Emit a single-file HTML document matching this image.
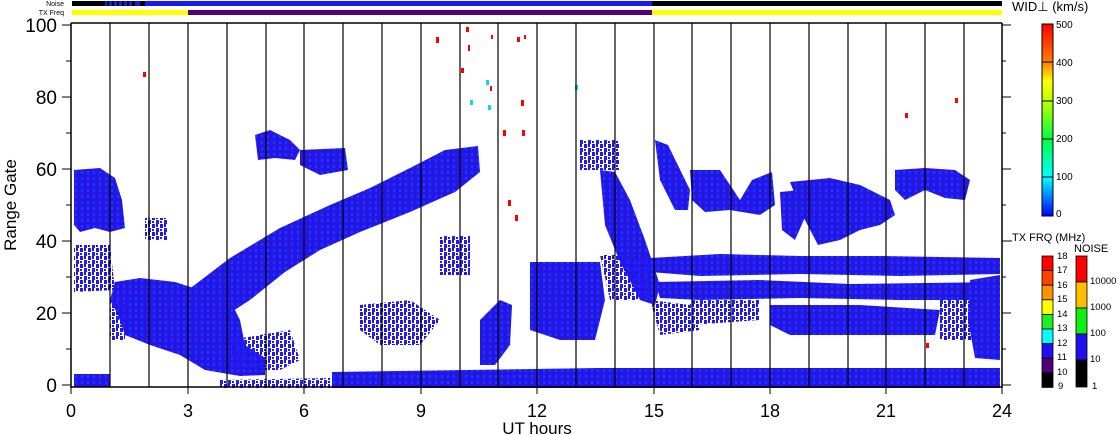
<!DOCTYPE html>
<html><head><meta charset="utf-8"><style>
html,body{margin:0;padding:0;background:#fff;width:1118px;height:435px;overflow:hidden}
svg{display:block}
text{font-family:"Liberation Sans","DejaVu Sans",sans-serif;fill:#000}
</style></head><body>
<svg width="1118" height="435" viewBox="0 0 1118 435" xmlns="http://www.w3.org/2000/svg">
<defs>
<linearGradient id="wid" x1="0" y1="1" x2="0" y2="0">
<stop offset="0" stop-color="#0000ff"/><stop offset="0.2" stop-color="#00ffff"/>
<stop offset="0.4" stop-color="#00ff40"/><stop offset="0.6" stop-color="#c0ff00"/>
<stop offset="0.7" stop-color="#ffff00"/><stop offset="0.8" stop-color="#ff8000"/>
<stop offset="1" stop-color="#ff0000"/></linearGradient>
<pattern id="sp" width="6" height="6" patternUnits="userSpaceOnUse">
<rect width="6" height="6" fill="#2216f0"/><rect x="0" y="0" width="2" height="3" fill="#3a10c0"/><rect x="3" y="3" width="2" height="3" fill="#1040ff"/>
</pattern>
<pattern id="sp2" width="8" height="8" patternUnits="userSpaceOnUse">
<rect x="0" y="0" width="3" height="4" fill="#2216f0"/><rect x="4" y="4" width="3" height="4" fill="#1a20ff"/><rect x="4" y="0" width="2" height="3" fill="#3010d0"/><rect x="0" y="5" width="2" height="2" fill="#2216f0"/>
</pattern>
</defs>

<rect x="72" y="1" width="930" height="5" fill="#1818f0"/>
<rect x="72" y="1" width="33" height="5" fill="#000"/>
<g fill="#000"><rect x="107" y="1" width="2" height="5"/><rect x="112" y="1" width="2" height="5"/><rect x="117" y="1" width="2" height="5"/><rect x="122" y="1" width="2" height="5"/><rect x="127" y="1" width="2" height="5"/><rect x="132" y="1" width="3" height="5"/><rect x="140" y="1" width="5" height="5"/></g>
<rect x="652" y="1" width="350" height="5" fill="#000"/>
<rect x="72" y="10" width="116" height="5" fill="#ffff00"/>
<rect x="188" y="10" width="464" height="5" fill="#500078"/>
<rect x="652" y="10" width="350" height="5" fill="#ffff00"/>
<text x="64" y="6" font-size="7" text-anchor="end">Noise</text>
<text x="64" y="15" font-size="7" text-anchor="end">TX Freq</text>

<g fill="url(#sp)">
<polygon points="74,170 100,168 115,178 122,200 125,228 110,232 95,228 80,232 74,225"/>
<polygon points="115,282 140,278 175,282 200,290 230,300 240,320 245,345 265,358 265,375 240,376 205,370 180,355 150,345 125,335 118,315 110,300"/>
<polygon points="188,290 230,258 280,228 330,205 370,188 410,168 445,150 478,146 480,172 455,192 410,212 360,232 320,250 285,272 250,300 222,318 200,322"/>
<polygon points="332,372 600,368 1000,368 1000,388 332,388"/>
<polygon points="74,374 110,374 110,387 74,387"/>
<polygon points="600,170 615,172 630,200 645,240 660,285 655,305 640,300 620,262 605,225"/>
<polygon points="655,140 668,145 690,190 688,210 675,210 660,180"/>
<polygon points="690,170 720,170 740,200 752,180 772,172 775,205 760,215 730,210 705,212 692,200"/>
<polygon points="780,192 800,190 806,215 795,240 782,230"/>
<polygon points="790,182 830,178 860,185 890,200 895,215 880,225 860,230 840,240 818,245 805,220"/>
<polygon points="895,170 925,168 955,170 970,180 965,200 945,198 925,190 905,200 895,190"/>
<polygon points="650,258 720,254 800,256 880,256 1000,258 1000,274 900,276 800,274 700,276 650,272"/>
<polygon points="655,282 760,280 850,284 1000,282 1000,300 900,300 800,298 700,300 660,298"/>
<polygon points="770,305 860,305 940,310 935,335 880,335 790,335 770,325"/>
<polygon points="970,280 1000,275 1000,360 975,358 968,320"/>
<polygon points="530,262 600,262 605,300 595,340 560,340 530,330"/>
<polygon points="480,320 500,300 512,305 510,345 495,365 480,365"/>
<polygon points="255,135 270,130 290,140 300,150 295,160 275,158 258,160"/>
<polygon points="300,150 345,148 348,170 320,175 300,165"/>
</g>
<g fill="url(#sp2)">
<polygon points="74,245 110,245 115,290 74,292"/>
<polygon points="145,218 168,218 168,240 145,240"/>
<polygon points="230,340 290,330 300,360 280,370 235,370"/>
<polygon points="360,305 410,300 440,320 420,345 380,345 360,330"/>
<polygon points="440,236 470,236 470,275 440,275"/>
<polygon points="650,300 690,305 700,330 660,335"/>
<polygon points="690,300 760,300 760,320 690,325"/>
<polygon points="940,300 970,300 975,340 940,340"/>
<polygon points="220,380 330,378 330,388 220,388"/>
<polygon points="580,140 620,140 620,170 580,170"/>
<polygon points="110,300 125,300 125,340 110,340"/>
<polygon points="600,255 650,255 650,300 610,300"/>
</g>
<g fill="#ff0000">
<rect x="436" y="37" width="3" height="6"/><rect x="466" y="27" width="3" height="5"/><rect x="468" y="45" width="2" height="6"/><rect x="491" y="35" width="2" height="4"/><rect x="517" y="37" width="3" height="5"/><rect x="524" y="35" width="2" height="4"/><rect x="521" y="100" width="3" height="6"/><rect x="503" y="130" width="3" height="6"/><rect x="522" y="130" width="3" height="6"/><rect x="461" y="68" width="3" height="5"/><rect x="490" y="86" width="2" height="5"/><rect x="508" y="200" width="3" height="6"/><rect x="515" y="215" width="3" height="6"/><rect x="143" y="72" width="3" height="5"/><rect x="905" y="113" width="3" height="5"/><rect x="955" y="98" width="3" height="5"/><rect x="926" y="343" width="3" height="5"/>
</g>
<g fill="#00e0e0"><rect x="486" y="80" width="3" height="5"/><rect x="470" y="100" width="3" height="5"/><rect x="488" y="105" width="3" height="5"/><rect x="575" y="85" width="3" height="5"/></g>

<g stroke="#000" stroke-width="1.2">
<line x1="110" y1="23" x2="110" y2="387"/><line x1="149" y1="23" x2="149" y2="387"/><line x1="188" y1="23" x2="188" y2="387"/><line x1="227" y1="23" x2="227" y2="387"/><line x1="266" y1="23" x2="266" y2="387"/><line x1="304" y1="23" x2="304" y2="387"/><line x1="343" y1="23" x2="343" y2="387"/><line x1="382" y1="23" x2="382" y2="387"/><line x1="421" y1="23" x2="421" y2="387"/><line x1="460" y1="23" x2="460" y2="387"/><line x1="498" y1="23" x2="498" y2="387"/><line x1="537" y1="23" x2="537" y2="387"/><line x1="576" y1="23" x2="576" y2="387"/><line x1="615" y1="23" x2="615" y2="387"/><line x1="654" y1="23" x2="654" y2="387"/><line x1="692" y1="23" x2="692" y2="387"/><line x1="731" y1="23" x2="731" y2="387"/><line x1="770" y1="23" x2="770" y2="387"/><line x1="809" y1="23" x2="809" y2="387"/><line x1="848" y1="23" x2="848" y2="387"/><line x1="886" y1="23" x2="886" y2="387"/><line x1="925" y1="23" x2="925" y2="387"/><line x1="964" y1="23" x2="964" y2="387"/>
</g>
<g stroke="#000" stroke-width="1.5" fill="none">
<line x1="71" y1="23" x2="1002" y2="23"/><line x1="71" y1="387" x2="1002" y2="387"/>
<line x1="71" y1="23" x2="71" y2="388"/><line x1="1002" y1="23" x2="1002" y2="388"/>
</g>
<g stroke="#000" stroke-width="1">
<line x1="62" y1="25" x2="71" y2="25"/><line x1="66" y1="61" x2="71" y2="61"/><line x1="62" y1="97" x2="71" y2="97"/><line x1="66" y1="133" x2="71" y2="133"/><line x1="62" y1="169" x2="71" y2="169"/><line x1="66" y1="205" x2="71" y2="205"/><line x1="62" y1="241" x2="71" y2="241"/><line x1="66" y1="277" x2="71" y2="277"/><line x1="62" y1="313" x2="71" y2="313"/><line x1="66" y1="349" x2="71" y2="349"/><line x1="62" y1="385" x2="71" y2="385"/>
<line x1="1002" y1="25" x2="1011" y2="25"/><line x1="1002" y1="61" x2="1006" y2="61"/><line x1="1002" y1="97" x2="1011" y2="97"/><line x1="1002" y1="133" x2="1006" y2="133"/><line x1="1002" y1="169" x2="1011" y2="169"/><line x1="1002" y1="205" x2="1006" y2="205"/><line x1="1002" y1="241" x2="1011" y2="241"/><line x1="1002" y1="277" x2="1006" y2="277"/><line x1="1002" y1="313" x2="1011" y2="313"/><line x1="1002" y1="349" x2="1006" y2="349"/><line x1="1002" y1="385" x2="1011" y2="385"/>
<line x1="71" y1="387" x2="71" y2="394"/><line x1="188" y1="387" x2="188" y2="394"/><line x1="304" y1="387" x2="304" y2="394"/><line x1="421" y1="387" x2="421" y2="394"/><line x1="537" y1="387" x2="537" y2="394"/><line x1="654" y1="387" x2="654" y2="394"/><line x1="770" y1="387" x2="770" y2="394"/><line x1="886" y1="387" x2="886" y2="394"/><line x1="1002" y1="387" x2="1002" y2="394"/>
</g>

<g font-size="19" text-anchor="end">
<text x="57" y="32">100</text><text x="57" y="104">80</text><text x="57" y="176">60</text><text x="57" y="248">40</text><text x="57" y="320">20</text><text x="57" y="392">0</text>
</g>
<g font-size="18" text-anchor="middle">
<text x="71" y="417">0</text><text x="188" y="417">3</text><text x="304" y="417">6</text><text x="421" y="417">9</text><text x="537" y="417">12</text><text x="654" y="417">15</text><text x="770" y="417">18</text><text x="886" y="417">21</text><text x="1002" y="417">24</text>
</g>
<text x="537" y="434" font-size="17" text-anchor="middle">UT hours</text>
<text transform="translate(16,205) rotate(-90)" font-size="17" text-anchor="middle">Range Gate</text>

<text x="1012" y="11" font-size="13">WID⊥ (km/s)</text>
<rect x="1042" y="24" width="11" height="192" fill="url(#wid)" stroke="#000" stroke-width="1"/>
<g stroke="#000"><line x1="1042" y1="62" x2="1053" y2="62"/><line x1="1042" y1="101" x2="1053" y2="101"/><line x1="1042" y1="139" x2="1053" y2="139"/><line x1="1042" y1="177" x2="1053" y2="177"/></g>
<g font-size="10"><text x="1056" y="28">500</text><text x="1056" y="66">400</text><text x="1056" y="104">300</text><text x="1056" y="142">200</text><text x="1056" y="180">100</text><text x="1056" y="217">0</text></g>

<text x="1012" y="241" font-size="11">TX FRQ (MHz)</text>
<line x1="1002" y1="241" x2="1012" y2="241" stroke="#000"/>
<text x="1074" y="252" font-size="11">NOISE</text>
<g stroke="#000" stroke-width="0.8">
<rect x="1042" y="256" width="11" height="14.6" fill="#ff0000"/>
<rect x="1042" y="270.6" width="11" height="14.6" fill="#ff4000"/>
<rect x="1042" y="285.2" width="11" height="14.6" fill="#ff9000"/>
<rect x="1042" y="299.8" width="11" height="14.6" fill="#ffff00"/>
<rect x="1042" y="314.4" width="11" height="14.6" fill="#20f020"/>
<rect x="1042" y="329" width="11" height="14.6" fill="#00ffff"/>
<rect x="1042" y="343.6" width="11" height="14.6" fill="#2010f0"/>
<rect x="1042" y="358.2" width="11" height="14.6" fill="#500078"/>
<rect x="1042" y="372.8" width="11" height="14.6" fill="#000"/>
<rect x="1076" y="256" width="11" height="26" fill="#ff0000"/>
<rect x="1076" y="282" width="11" height="26" fill="#ffc000"/>
<rect x="1076" y="308" width="11" height="26" fill="#10f010"/>
<rect x="1076" y="334" width="11" height="26" fill="#2010f0"/>
<rect x="1076" y="360" width="11" height="27" fill="#000"/>
</g>
<g font-size="9.5"><text x="1057" y="259">18</text><text x="1057" y="273">17</text><text x="1057" y="288">16</text><text x="1057" y="302">15</text><text x="1057" y="317">14</text><text x="1057" y="331">13</text><text x="1057" y="346">12</text><text x="1057" y="360">11</text><text x="1057" y="375">10</text><text x="1058" y="389">9</text>
<text x="1090" y="284">10000</text><text x="1090" y="310">1000</text><text x="1090" y="336">100</text><text x="1090" y="362">10</text><text x="1092" y="389">1</text></g>
</svg>
</body></html>
